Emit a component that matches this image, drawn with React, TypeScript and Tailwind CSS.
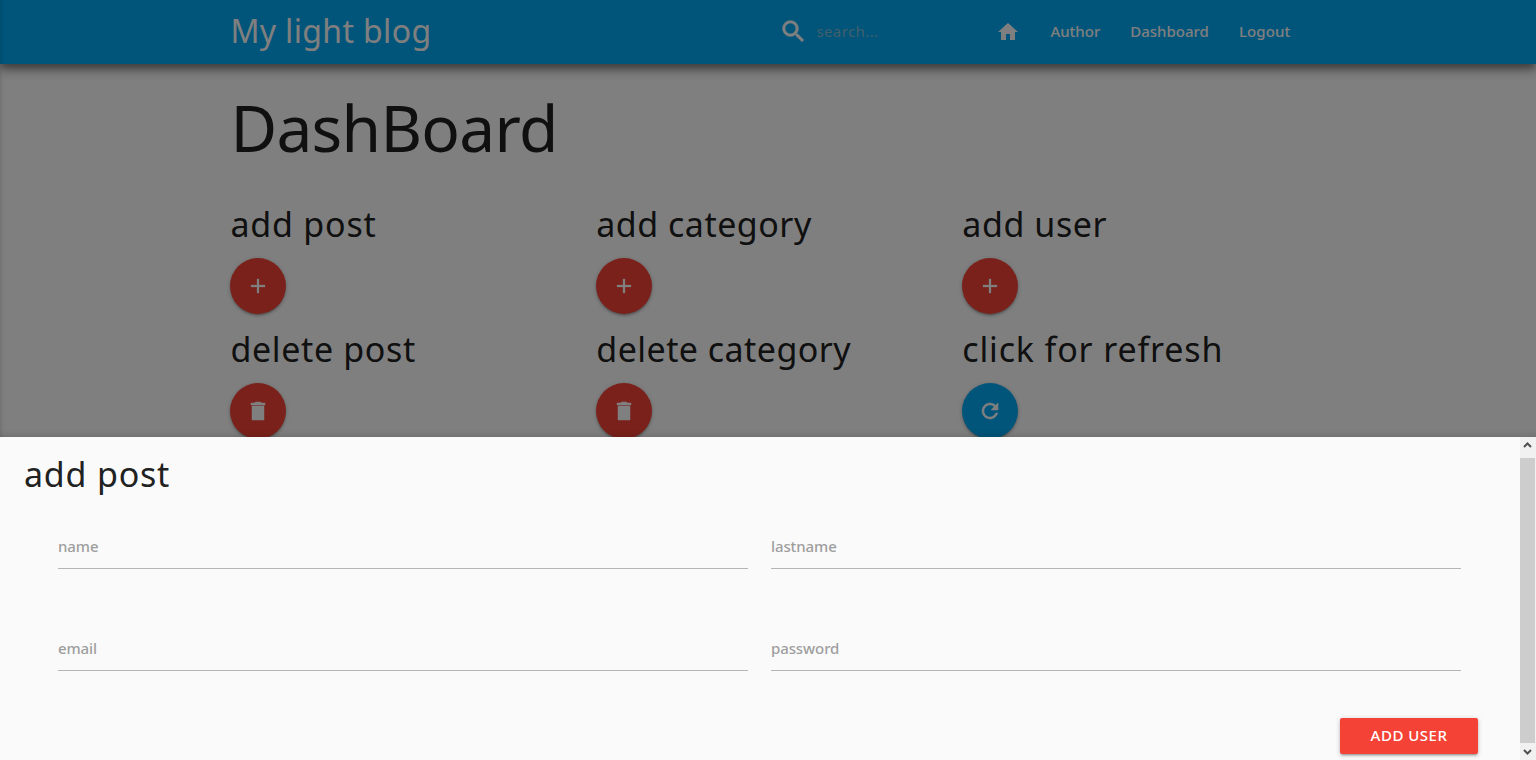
import type { ReactNode } from "react";

type Action = { title: string; tracking: string; icon: keyof typeof paths; color: string };

const paths = {
  search:
    "M15.5 14h-.79l-.28-.27C15.41 12.59 16 11.11 16 9.5 16 5.91 13.09 3 9.5 3S3 5.91 3 9.5 5.91 16 9.5 16c1.61 0 3.09-.59 4.23-1.57l.27.28v.79l5 4.99L20.49 19l-4.99-5zm-6 0C7.01 14 5 11.99 5 9.5S7.01 5 9.5 5 14 7.01 14 9.5 11.99 14 9.5 14z",
  home: "M10 20v-6h4v6h5v-8h3L12 3 2 12h3v8z",
  add: "M19 13h-6v6h-2v-6H5v-2h6V5h2v6h6v2z",
  remove: "M6 21h12V7H6v14zM19 4h-3.5l-1-1h-5l-1 1H5v2h14V4z",
  refresh:
    "M17.65 6.35C16.2 4.9 14.21 4 12 4c-4.42 0-7.99 3.58-7.99 8s3.57 8 7.99 8c3.73 0 6.84-2.55 7.73-6h-2.08c-.82 2.33-3.04 4-5.65 4-3.31 0-6-2.69-6-6s2.69-6 6-6c1.66 0 3.14.69 4.22 1.78L13 11h7V4l-2.35 2.35z",
};

const strokes = { search: 0.5, home: 0, add: 0.25, remove: 0.5, refresh: 0.5 };

const actions: Action[] = [
  { title: "add post", tracking: "tracking-[0.8px]", icon: "add", color: "bg-[#f44336]" },
  { title: "add category", tracking: "tracking-[0.5px]", icon: "add", color: "bg-[#f44336]" },
  { title: "add user", tracking: "tracking-[0.6px]", icon: "add", color: "bg-[#f44336]" },
  { title: "delete post", tracking: "tracking-[0.65px]", icon: "remove", color: "bg-[#f44336]" },
  { title: "delete category", tracking: "tracking-[0.45px]", icon: "remove", color: "bg-[#f44336]" },
  { title: "click for refresh", tracking: "tracking-[0.87px]", icon: "refresh", color: "bg-[#03a9f4]" },
];

function Icon({ name, className }: { name: keyof typeof paths; className: string }) {
  return (
    <svg
      viewBox="0 0 24 24"
      fill="currentColor"
      stroke="currentColor"
      strokeWidth={strokes[name]}
      className={`shrink-0 ${className}`}
    >
      <path d={paths[name]} />
    </svg>
  );
}

function Header() {
  return (
    <header className="relative h-16 shrink-0 bg-[#03a9f4] px-[230.4px] text-white shadow-[0_8px_10px_0_rgba(0,0,0,0.2),0_3px_14px_0_rgba(0,0,0,0.14),0_5px_6px_-1px_rgba(0,0,0,0.3)]">
      <nav className="flex h-full items-center">
        <a className="w-[549px] pb-0.5 text-[32px] leading-none tracking-[0.35px] whitespace-nowrap">My light blog</a>
        <div className="flex w-[217px] items-center">
          <Icon name="search" className="mb-px size-[29px]" />
          <span className="mb-[2px] ml-[8px] text-[15px] leading-5 tracking-[0.4px] text-[#84bfd8]">search...</span>
        </div>
        <div className="flex items-center text-[15px] leading-5 font-medium">
          <Icon name="home" className="mr-[30px] size-6" />
          <a className="mr-[30px] mb-[2px]">Author</a>
          <a className="mr-[30px] mb-[2px]">Dashboard</a>
          <a className="mb-[2px] tracking-[0.1px]">Logout</a>
        </div>
      </nav>
    </header>
  );
}

function ActionItem({ title, tracking, icon, color }: Action) {
  return (
    <div className="h-[125px]">
      <h4 className={`h-[53px] text-[34px] leading-[38px] font-normal whitespace-nowrap ${tracking}`}>{title}</h4>
      <button
        className={`flex size-14 items-center justify-center rounded-full text-white shadow-[0_2px_2px_0_rgba(0,0,0,0.14),0_3px_1px_-2px_rgba(0,0,0,0.12),0_1px_5px_0_rgba(0,0,0,0.2)] ${color}`}
      >
        <Icon name={icon} className="size-6" />
      </button>
    </div>
  );
}

function Field({ children }: { children: ReactNode }) {
  return (
    <div className="h-[102px]">
      <div className="h-[44px] border-b border-[#b5b5b5] pt-[11px] text-[15px] leading-5 font-medium tracking-[-0.1px] text-[#9e9e9e]">
        {children}
      </div>
    </div>
  );
}

function Modal() {
  return (
    <section className="flex h-[323px] bg-[#fafafa]">
      <div className="flex-1">
        <h4 className="h-[88px] pt-[18px] pl-6 text-[34px] leading-[38px] font-normal tracking-[0.8px]">add post</h4>
        <div className="grid grid-cols-2 gap-x-[23px] pr-[59px] pl-[58px]">
          <Field>name</Field>
          <Field>lastname</Field>
          <Field>email</Field>
          <Field>password</Field>
        </div>
        <div className="-mt-[11px] flex justify-end pr-[42px]">
          <button className="h-9 w-[138px] rounded-[2px] bg-[#f44336] pb-[2px] text-[15px] leading-[34px] font-medium tracking-[0.5px] text-white shadow-[0_2px_2px_0_rgba(0,0,0,0.14),0_3px_1px_-2px_rgba(0,0,0,0.12),0_1px_5px_0_rgba(0,0,0,0.2)]">
            ADD USER
          </button>
        </div>
      </div>
      <Scrollbar />
    </section>
  );
}

function Scrollbar() {
  return (
    <div className="flex w-4 flex-col bg-[#f1f1f1]">
      <div className="flex h-[21px] justify-center pt-[5px] pr-px">
        <svg width="9" height="6" viewBox="0 0 9 6" fill="none" stroke="#505050" strokeWidth="2">
          <path d="M1 5 4.5 1.5 8 5" />
        </svg>
      </div>
      <div className="mr-px flex-1 bg-[#cdcdcd]" />
      <div className="flex h-[17px] items-center justify-center pr-px">
        <svg width="9" height="6" viewBox="0 0 9 6" fill="none" stroke="#505050" strokeWidth="2">
          <path d="M1 1 4.5 4.5 8 1" />
        </svg>
      </div>
    </div>
  );
}

export default function App() {
  return (
    <div className="flex h-[760px] w-full flex-col overflow-hidden bg-white font-['Noto_Sans',sans-serif] text-[#212121]">
      <div className="relative flex h-[437px] flex-col overflow-hidden">
        <Header />
        <main className="px-[230.4px]">
          <h1 className="pt-[29px] text-[64px] leading-[70px] font-normal tracking-[-0.7px]">DashBoard</h1>
          <div className="mt-[42px] grid grid-cols-3 gap-x-[22.5px]">
            {actions.map((action) => (
              <ActionItem key={action.title} {...action} />
            ))}
          </div>
        </main>
        <div className="absolute inset-0 bg-black/50 shadow-[inset_5px_0_5px_-5px_rgba(0,0,0,0.2),inset_0_-9px_9px_-9px_rgba(0,0,0,0.2)]" />
      </div>
      <Modal />
    </div>
  );
}
